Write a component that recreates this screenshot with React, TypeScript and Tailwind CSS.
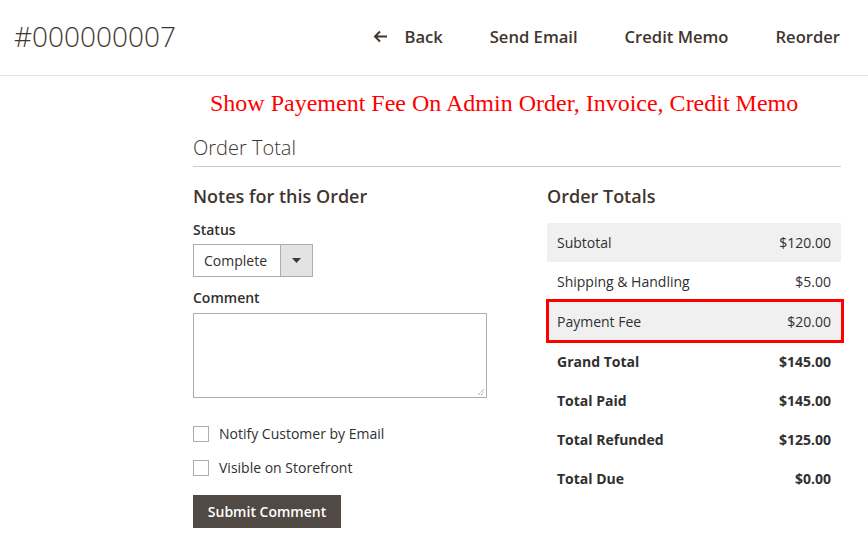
import React from "react";

const rows = [
  { label: "Subtotal", value: "$120.00", shade: true },
  { label: "Shipping & Handling", value: "$5.00" },
];
const boldRows = [
  { label: "Grand Total", value: "$145.00" },
  { label: "Total Paid", value: "$145.00" },
  { label: "Total Refunded", value: "$125.00" },
  { label: "Total Due", value: "$0.00" },
];

export default function App() {
  return (
    <div className="w-[868px] h-[549px] bg-white text-[#303030] overflow-hidden" style={{ fontFamily: "'Open Sans', 'Liberation Sans', sans-serif" }}>
      <header className="h-[76px] border-b border-[#e3e3e3] flex items-center justify-between pl-[14px] pr-[28px]">
        <h1 className="text-[28px] font-light text-[#41362f] leading-[28px] mb-[4px]">#000000007</h1>
        <nav className="-mt-[1px] flex items-center gap-[47px] text-[16.6px] font-semibold text-[#41362f]">
          <span className="flex items-center gap-[16px]">
            <svg width="15" height="13" viewBox="0 0 15 13" fill="none">
              <path d="M14 6.5H2M7 1.5L2 6.5L7 11.5" stroke="#41362f" strokeWidth="2" />
            </svg>
            Back
          </span>
          <span>Send Email</span>
          <span>Credit Memo</span>
          <span>Reorder</span>
        </nav>
      </header>

      <div className="pl-[193px] pr-[27px]">
        <div className="pl-[17px] pt-[15px] h-[59px] text-[24px] text-[#ff0000] leading-none" style={{ fontFamily: "'Liberation Serif', serif" }}>
          Show Payement Fee On Admin Order, Invoice, Credit Memo
        </div>
        <div className="border-b border-[#cccccc] pb-[5px] text-[20px] font-light text-[#41362f] leading-[26px]">Order Total</div>

        <div className="flex gap-[60px] pt-[17px]">
          <div className="w-[294px] flex flex-col">
            <h2 className="text-[18px] font-semibold text-[#41362f] leading-[24px]">Notes for this Order</h2>
            <div className="mt-[13px] text-[14px] font-semibold text-[#303030] leading-[18px]">Status</div>
            <div className="mt-[5px] w-[120px] h-[33px] border border-[#adadad] flex">
              <div className="flex-1 flex items-center pl-[10px] text-[14px] text-[#303030]">Complete</div>
              <div className="w-[32px] bg-[#e3e3e3] border-l border-[#adadad] flex items-center justify-center">
                <svg width="9" height="5" viewBox="0 0 9 5"><path d="M0 0H9L4.5 5Z" fill="#41362f" /></svg>
              </div>
            </div>
            <div className="mt-[12px] text-[14px] font-semibold text-[#303030] leading-[18px]">Comment</div>
            <div className="mt-[6px] relative w-[294px] h-[85px] border border-[#adadad] bg-white">
              <svg className="absolute right-[1px] bottom-[1px]" width="8" height="8" viewBox="0 0 8 8">
                <path d="M1 7L7 1M4 7L7 4" stroke="#777" strokeWidth="1" strokeDasharray="1 1" />
              </svg>
            </div>
            <label className="mt-[27px] flex items-center gap-[10px] text-[14px] text-[#303030] leading-[18px]">
              <span className="w-[16px] h-[16px] border border-[#adadad] bg-white" />
              Notify Customer by Email
            </label>
            <label className="mt-[16px] flex items-center gap-[10px] text-[14px] text-[#303030] leading-[18px]">
              <span className="w-[16px] h-[16px] border border-[#adadad] bg-white" />
              Visible on Storefront
            </label>
            <button className="mt-[18px] self-start w-[148px] h-[33px] bg-[#514943] text-white text-[14px] font-semibold">Submit Comment</button>
          </div>

          <div className="w-[294px] flex flex-col">
            <h2 className="text-[18px] font-semibold text-[#41362f] leading-[24px]">Order Totals</h2>
            <div className="mt-[15px] text-[14px]">
              {rows.map((r) => (
                <div key={r.label} className={`h-[39px] flex items-center justify-between px-[10px] ${r.shade ? "bg-[#f0f0f0]" : ""}`}>
                  <span>{r.label}</span>
                  <span>{r.value}</span>
                </div>
              ))}
              <div className="-ml-[1px] -mr-[3px] -mt-[2px] h-[44px] border-[3px] border-[#ff0000] bg-[#f0f0f0] flex items-center justify-between pl-[8px] pr-[10px]">
                <span>Payment Fee</span>
                <span>$20.00</span>
              </div>
              <div className="-mt-[1px]">
                {boldRows.map((r) => (
                  <div key={r.label} className="h-[39px] flex items-center justify-between px-[10px] font-bold">
                    <span>{r.label}</span>
                    <span>{r.value}</span>
                  </div>
                ))}
              </div>
            </div>
          </div>
        </div>
      </div>
    </div>
  );
}
